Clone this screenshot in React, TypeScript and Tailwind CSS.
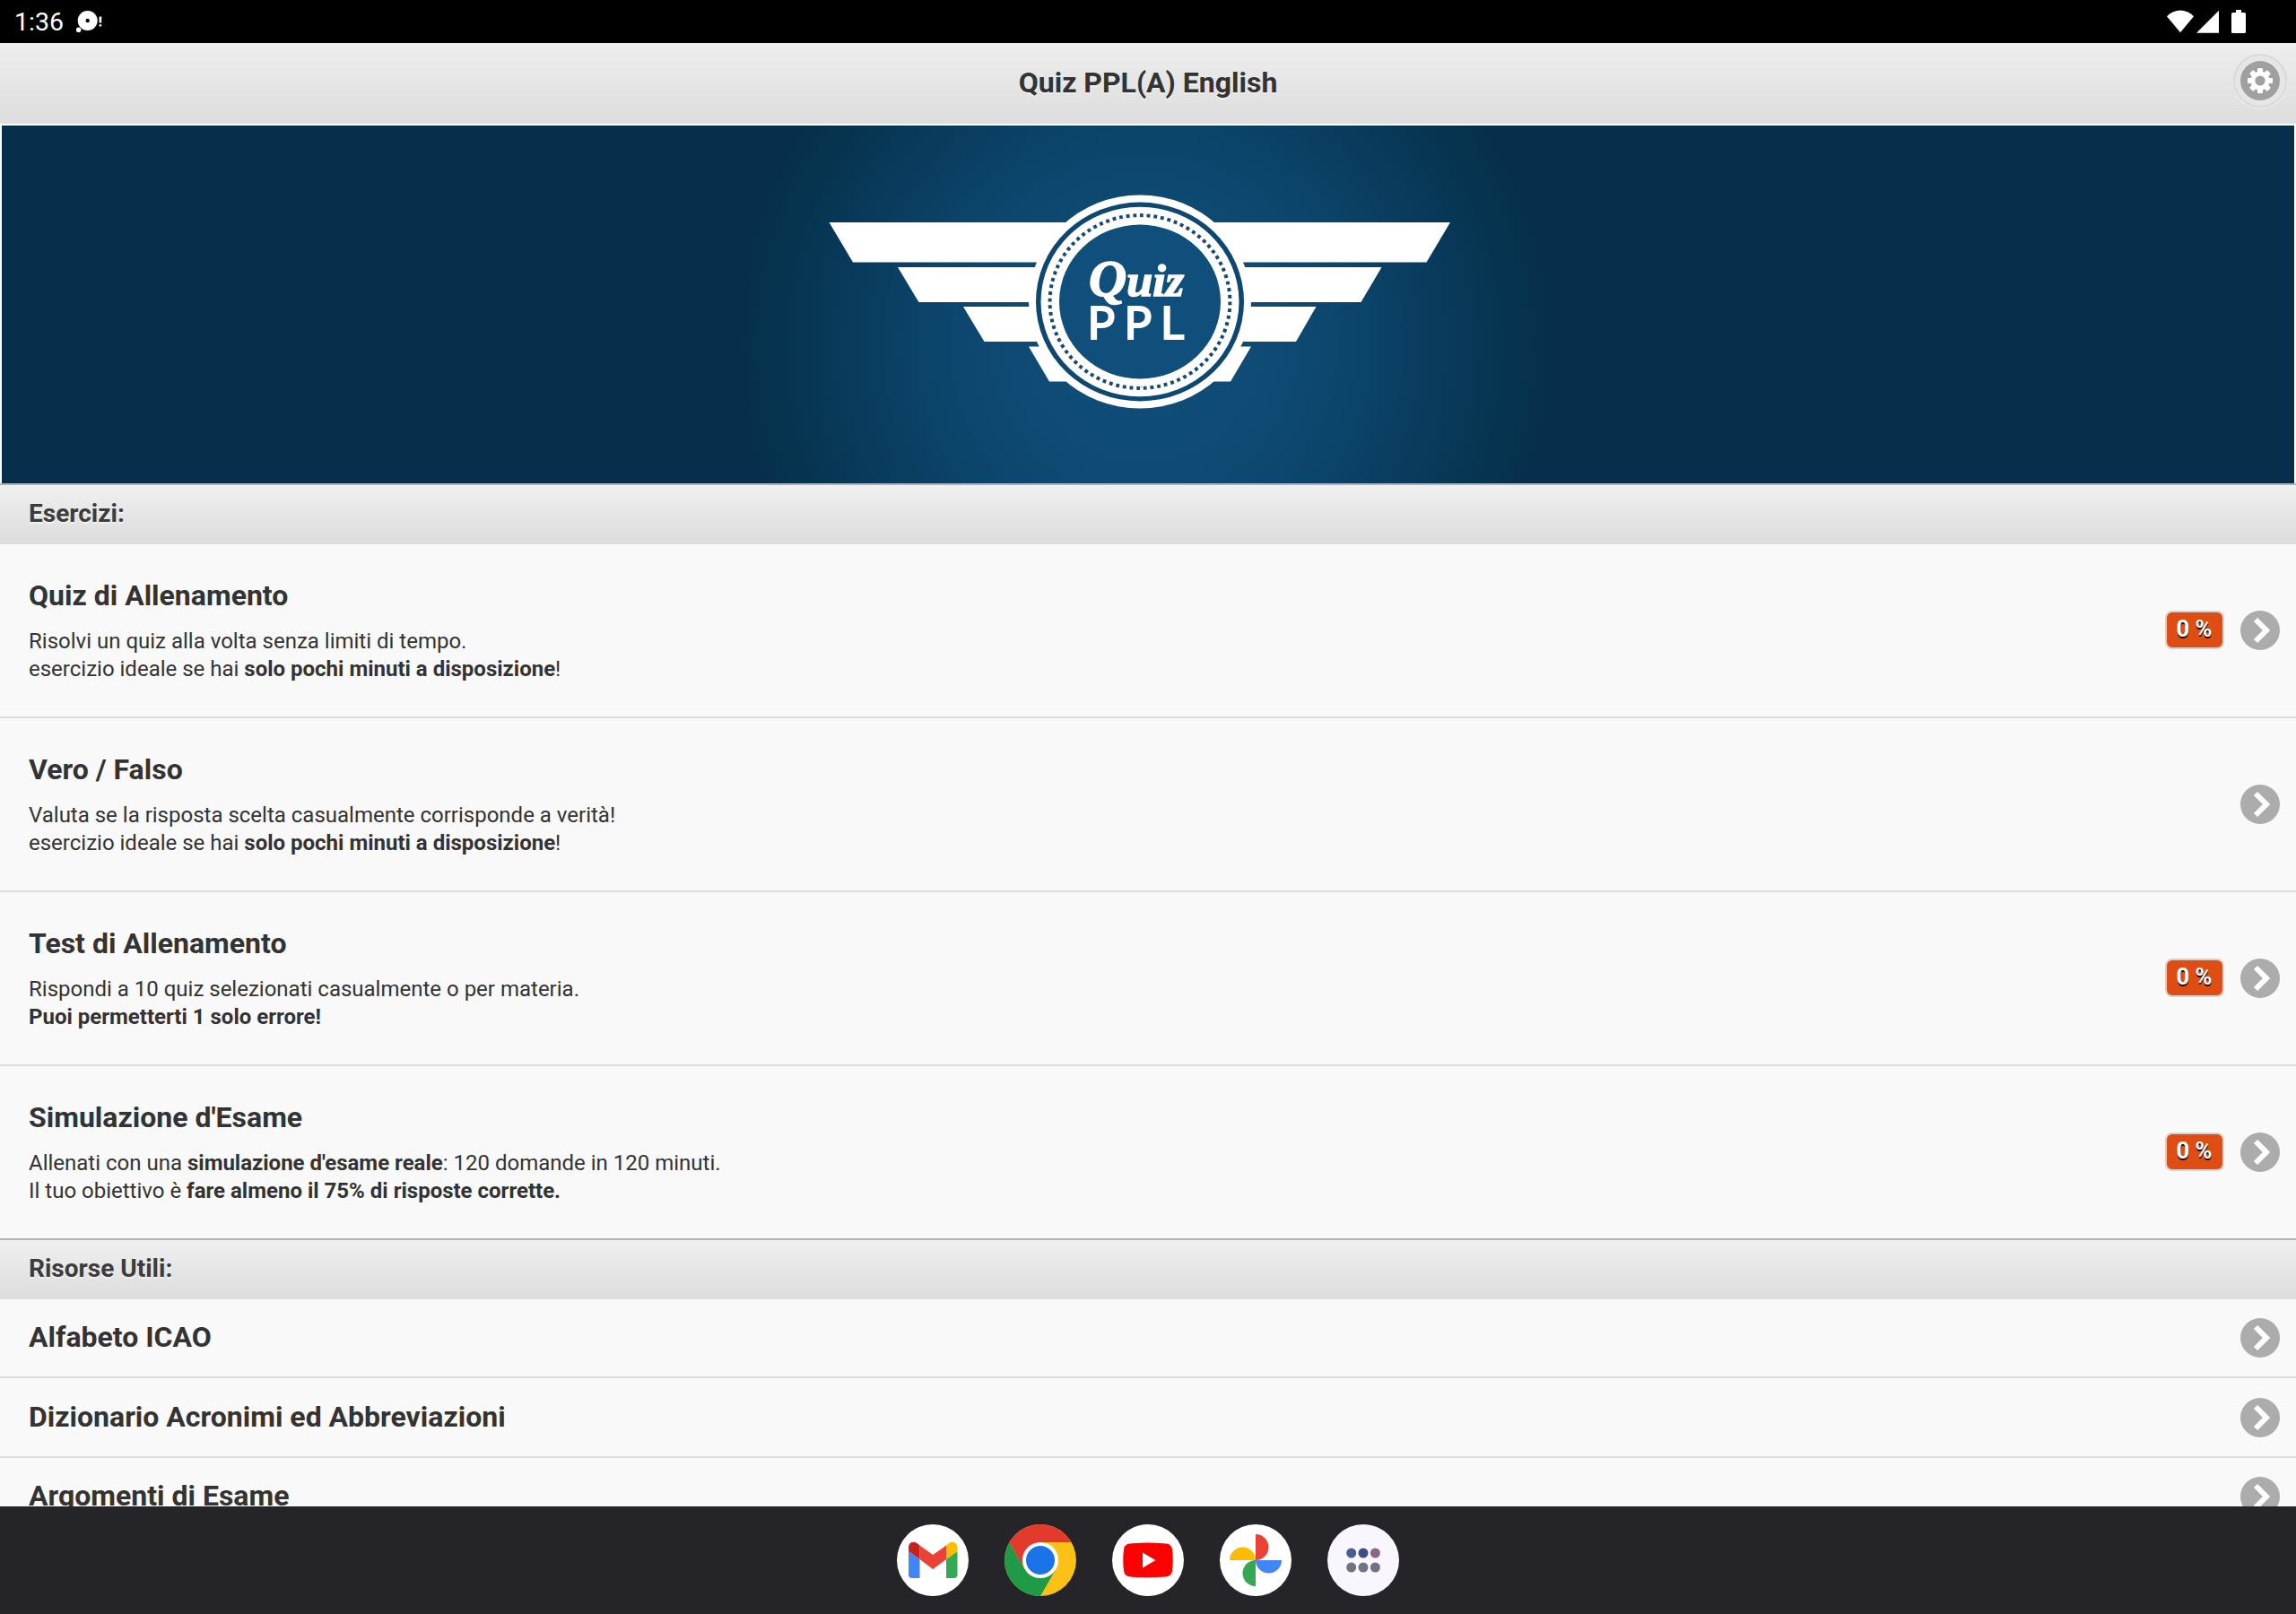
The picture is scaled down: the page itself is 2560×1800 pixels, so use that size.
import type { ReactNode } from "react";

type Exercise = {
	title: string;
	lines: [ReactNode, ReactNode];
	score?: string;
};

const EXERCISES: Exercise[] = [
	{
		title: "Quiz di Allenamento",
		lines: [
			"Risolvi un quiz alla volta senza limiti di tempo.",
			<>
				esercizio ideale se hai <b>solo pochi minuti a disposizione</b>!
			</>,
		],
		score: "0 %",
	},
	{
		title: "Vero / Falso",
		lines: [
			"Valuta se la risposta scelta casualmente corrisponde a verità!",
			<>
				esercizio ideale se hai <b>solo pochi minuti a disposizione</b>!
			</>,
		],
	},
	{
		title: "Test di Allenamento",
		lines: [
			"Rispondi a 10 quiz selezionati casualmente o per materia.",
			<b>Puoi permetterti 1 solo errore!</b>,
		],
		score: "0 %",
	},
	{
		title: "Simulazione d'Esame",
		lines: [
			<>
				Allenati con una <b>simulazione d'esame reale</b>: 120 domande in 120
				minuti.
			</>,
			<>
				Il tuo obiettivo è <b>fare almeno il 75% di risposte corrette.</b>
			</>,
		],
		score: "0 %",
	},
];

const RESOURCES = [
	"Alfabeto ICAO",
	"Dizionario Acronimi ed Abbreviazioni",
	"Argomenti di Esame",
];

function StatusBar() {
	return (
		<div className="flex h-12 shrink-0 items-center justify-between bg-black pl-4 pr-[55px] text-white">
			<div className="flex items-center">
				<span className="w-[69px] pt-[3px] text-[28.5px] leading-none">
					1:36
				</span>
				<svg className="h-6 w-[30px]" viewBox="0 0 30 24" fill="currentColor">
					<path
						fillRule="evenodd"
						d="M12.7 0a11 11 0 1 1 0 22 11 11 0 0 1 0-22Zm0 8.8a2.2 2.2 0 1 0 0 4.4 2.2 2.2 0 0 0 0-4.4Z"
					/>
					<circle cx="2.6" cy="21.2" r="2.8" />
					<path d="M25.6 6.5h2.6v7h-2.6zM25.6 15.2h2.6v2.4h-2.6z" />
				</svg>
			</div>
			<svg className="h-[26px] w-[89px]" viewBox="0 0 89 26" fill="currentColor">
				<path d="M0 7.2C9-1.8 21-1.8 30 7.2L15 25.3Z" />
				<path d="M33 25.7 58 .7v25Z" />
				<path d="M77 0h6v3h3.4a1.6 1.6 0 0 1 1.6 1.6v19.8a1.6 1.6 0 0 1-1.6 1.6H73.6a1.6 1.6 0 0 1-1.6-1.6V4.6A1.6 1.6 0 0 1 73.6 3H77Z" />
			</svg>
		</div>
	);
}

function Gear() {
	return (
		<div className="flex size-[60px] items-center justify-center rounded-full border-2 border-[#d9d9d9] bg-[#e6e6e6] shadow-[0_2px_0_rgba(255,255,255,0.3)]">
			<svg className="size-11" viewBox="0 0 44 44">
				<circle cx="22" cy="22" r="22" fill="#a0a0a0" />
				<g fill="#fff">
					{[0, 45, 90, 135].map((deg) => (
						<rect
							key={deg}
							x="19"
							y="8"
							width="6"
							height="28"
							rx="1"
							transform={`rotate(${deg} 22 22)`}
						/>
					))}
					<circle cx="22" cy="22" r="10.5" />
				</g>
				<circle cx="22" cy="22" r="5.6" fill="#a0a0a0" />
			</svg>
		</div>
	);
}

function Header() {
	return (
		<header className="grid h-[90px] shrink-0 grid-cols-[1fr_auto_1fr] items-center bg-linear-to-b from-[#eeeeee] to-[#dddddd]">
			<h1 className="col-start-2 pb-[3px] text-[32px] font-bold leading-[42px] text-[#333] [text-shadow:0_2px_0_#eee]">
				Quiz PPL(A) English
			</h1>
			<div className="justify-self-end pb-1.5 pr-2.5">
				<Gear />
			</div>
		</header>
	);
}

function Banner() {
	return (
		<div className="h-[401px] shrink-0 bg-white px-0.5 pt-0.5">
			<div className="flex h-full justify-center bg-[#072f4b] bg-[radial-gradient(circle_450px_at_1274px_245px,#10507c_0%,#0d476f_45%,#093a5b_75%,#05324c_95%,#072f4b_100%)]">
				<svg className="h-full w-[800px]" viewBox="880 140 800 399">
					<g fill="#fff">
						<path d="M924.5 248H1617L1590.5 292.5H951Z" />
						<path d="M1001 298H1540.5L1517.5 337H1024.5Z" />
						<path d="M1074 342H1467.5L1445 381H1097.5Z" />
						<path d="M1147 386.5H1395L1372 425.5H1170Z" />
						<ellipse cx="1271" cy="336.5" rx="124" ry="119" />
					</g>
					<ellipse cx="1271" cy="336.5" rx="116" ry="111" fill="#0e4871" />
					<ellipse cx="1271" cy="336.5" rx="110.5" ry="105.7" fill="#fff" />
					<ellipse
						cx="1271"
						cy="336.5"
						rx="100.4"
						ry="96.4"
						fill="none"
						stroke="#174a70"
						strokeWidth="4"
						strokeDasharray="0.5 0.5"
						pathLength="80"
					/>
					<ellipse cx="1271" cy="336.5" rx="90" ry="86" fill="#104f7b" />
					<text
						x="1214"
						y="330"
						textLength="106"
						lengthAdjust="spacingAndGlyphs"
						fill="#fff"
						stroke="#fff"
						strokeWidth="1.5"
						className="font-['Liberation_Serif',serif] text-[50px] font-bold italic"
					>
						<tspan className="text-[56px]">Q</tspan>uiz
					</text>
					<text
						y="378"
						fill="#fff"
						stroke="#fff"
						strokeWidth="2"
						className="font-[Lato,sans-serif] text-[51px]"
					>
						<tspan x="1212.5">P</tspan>
						<tspan x="1253.5">P</tspan>
						<tspan x="1294">L</tspan>
					</text>
				</svg>
			</div>
		</div>
	);
}

function Divider({ children }: { children: ReactNode }) {
	return (
		<div className="h-[68px] shrink-0 border-t-2 border-[#b3b3b3] bg-linear-to-b from-[#f0f0f0] to-[#dcdcdc] px-8 pt-3.5 text-[28px] font-bold leading-[36px] text-[#3c3c3c] [text-shadow:0_2px_0_#f0f0f0]">
			{children}
		</div>
	);
}

function Arrow() {
	return (
		<svg className="size-11" viewBox="0 0 44 44">
			<circle cx="22" cy="22" r="22" fill="#acacac" />
			<path
				d="M17 10 29 22 17 34"
				fill="none"
				stroke="#fff"
				strokeWidth="6"
			/>
		</svg>
	);
}

function ExerciseRow({ title, lines, score }: Exercise) {
	return (
		<li className="flex h-48 items-center justify-between pl-8 pr-[18px] not-last:h-[194px]">
			<div className="-mt-px">
				<h2 className="text-[32px] font-bold leading-[42px]">{title}</h2>
				<p className="mt-[15px] text-2xl leading-[31px]">
					{lines[0]}
					<br />
					{lines[1]}
				</p>
			</div>
			<div className="flex items-center gap-[18px]">
				{score && (
					<span className="-mt-px flex h-[43px] w-[66px] items-center justify-center rounded-lg border-2 border-[#ddd0ca] bg-[#de4d14] pb-0.5 pr-px text-[25.5px] font-bold leading-none text-white [text-shadow:0_2px_0_#111]">
						{score}
					</span>
				)}
				<Arrow />
			</div>
		</li>
	);
}

function ResourceRow({ title }: { title: string }) {
	return (
		<li className="flex h-[87px] items-center justify-between pl-8 pr-[18px] not-last:h-[88.4px]">
			<h2 className="pb-0.5 text-[32px] font-bold leading-[42px]">{title}</h2>
			<Arrow />
		</li>
	);
}

function Gmail() {
	return (
		<svg className="size-20" viewBox="0 0 80 80">
			<circle cx="40" cy="40" r="40" fill="#fff" />
			<path d="M13 30v26q0 4 4 4h8.5V39Z" fill="#4285f4" />
			<path d="M67.5 30v26q0 4-4 4H55V39Z" fill="#34a853" />
			<path d="M25.5 23.5 40.2 34 55 23.5v15.5L40.2 50 25.5 39Z" fill="#ea4335" />
			<path d="M13 30V26c0-6 6-8 10-4.5L25.5 23.5V39L13 30Z" fill="#c5221f" />
			<path d="M67.5 30V26c0-6-6-8-10-4.5L55 23.5V39L67.5 30Z" fill="#fbbc04" />
		</svg>
	);
}

function Chrome() {
	return (
		<svg className="size-20" viewBox="0 0 80 80">
			<circle cx="40" cy="40" r="40" fill="#fbc116" />
			<path d="M5.4 20A40 40 0 0 0 40 80L57.3 50 22.7 50Z" fill="#219a48" />
			<path d="M5.4 20A40 40 0 0 1 74.6 20H40L22.7 50Z" fill="#e23b2e" />
			<circle cx="40" cy="40" r="20" fill="#fff" />
			<circle cx="40" cy="40" r="16" fill="#1a73e8" />
		</svg>
	);
}

function YouTube() {
	return (
		<svg className="size-20" viewBox="0 0 80 80">
			<circle cx="40" cy="40" r="40" fill="#fff" />
			<path
				d="M20 21.5Q40 19.5 60 21.5 66.5 22 67 28 68.5 40 67 52 66.5 57.5 60 58.5 40 60 20 58.5 13.5 57.5 13 52 11.5 40 13 28 13.5 22 20 21.5Z"
				fill="#f00"
			/>
			<path d="M34 31.5 48.5 40 34 48.5Z" fill="#fff" />
		</svg>
	);
}

function Photos() {
	return (
		<svg className="size-20" viewBox="0 0 80 80">
			<circle cx="40" cy="40" r="40" fill="#fff" />
			<path d="M40 11a14.5 14.5 0 0 1 0 29Z" fill="#ea4335" />
			<path d="M69 40a14.5 14.5 0 0 1-29 0Z" fill="#4285f4" />
			<path d="M40 69a14.5 14.5 0 0 1 0-29Z" fill="#34a853" />
			<path d="M11 40a14.5 14.5 0 0 1 29 0Z" fill="#fbbc04" />
		</svg>
	);
}

function AppDrawer() {
	return (
		<svg className="size-20" viewBox="0 0 80 80">
			<circle cx="40" cy="40" r="40" fill="#f9f7fd" />
			<circle cx="26.7" cy="32" r="5.5" fill="#485d92" />
			<circle cx="40" cy="32" r="5.5" fill="#3a4f87" />
			<circle cx="53.4" cy="32" r="5.5" fill="#8b6786" />
			<circle cx="26.7" cy="48" r="5.5" fill="#6f7383" />
			<circle cx="40" cy="48" r="5.5" fill="#6f7383" />
			<circle cx="53.4" cy="48" r="5.5" fill="#6f7383" />
		</svg>
	);
}

export default function App() {
	return (
		<div className="flex h-[1800px] w-[2560px] flex-col overflow-hidden bg-[#f9f9f9] font-[Roboto,sans-serif] text-[#333]">
			<StatusBar />
			<Header />
			<main className="flex min-h-0 flex-1 flex-col overflow-hidden">
				<Banner />
				<Divider>Esercizi:</Divider>
				<ul className="shrink-0 divide-y-2 divide-[#ddd]">
					{EXERCISES.map((exercise) => (
						<ExerciseRow key={exercise.title} {...exercise} />
					))}
				</ul>
				<Divider>Risorse Utili:</Divider>
				<ul className="shrink-0 divide-y-2 divide-[#ddd]">
					{RESOURCES.map((title) => (
						<ResourceRow key={title} title={title} />
					))}
				</ul>
			</main>
			{/* Taskbar */}
			<nav className="flex h-[120px] shrink-0 items-center justify-center gap-10 bg-[#252429]">
				<Gmail />
				<Chrome />
				<YouTube />
				<Photos />
				<AppDrawer />
			</nav>
		</div>
	);
}
